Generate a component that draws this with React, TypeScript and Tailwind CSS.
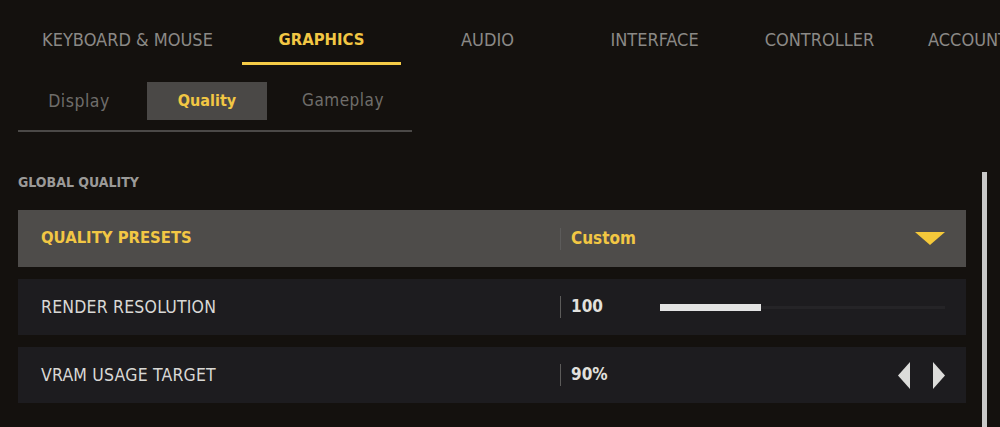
import React from "react";

const tabs = [
  { label: "KEYBOARD & MOUSE", w: "w-[195px]" },
  { label: "GRAPHICS", w: "w-[159px] ml-[17px]", active: true },
  { label: "AUDIO", w: "w-[173px]" },
  { label: "INTERFACE", w: "w-[161px]" },
  { label: "CONTROLLER", w: "w-[169px]" },
  { label: "ACCOUNT", w: "w-[128px]" },
];

function Divider() {
  return <div className="w-px h-[22px] bg-[#5c5b5a]" />;
}

function Row({
  label,
  value,
  active,
  children,
}: {
  label: string;
  value: string;
  active?: boolean;
  children?: React.ReactNode;
}) {
  return (
    <div
      className={
        "flex items-center pl-[23px] pr-[21px] " +
        (active ? "h-[57px] bg-[#4e4c4a]" : "h-[56px] bg-[#1d1c1f]")
      }
    >
      <div
        className={
          "w-[519px] " +
          (active
            ? "text-[16.5px] font-bold text-[#f2c744]"
            : "text-[17.5px] tracking-[0.2px] text-[#d9d8d5]")
        }
      >
        {label}
      </div>
      <Divider />
      <div
        className={
          "ml-[10px] text-[17px] font-bold " +
          (active ? "text-[#f2c744]" : "text-[#e2e1de]")
        }
      >
        {value}
      </div>
      <div className="flex-1 flex items-center justify-end">{children}</div>
    </div>
  );
}

export default function App() {
  return (
    <div className="w-[1000px] h-[427px] overflow-hidden bg-[#14110e] font-['Liberation_Sans_Narrow','DejaVu_Sans_Condensed','Liberation_Sans',sans-serif]">
      {/* Top tabs */}
      <div className="flex pl-[30px] whitespace-nowrap">
        {tabs.map((t) => (
          <div
            key={t.label}
            className={
              "shrink-0 text-center pt-[28px] pb-[10px] leading-[24px] border-b-[3px] " +
              t.w +
              (t.active
                ? " text-[16.5px] font-bold text-[#f2c744] border-[#f5cb46]"
                : " text-[18px] text-[#8b8986] border-transparent")
            }
          >
            {t.label}
          </div>
        ))}
      </div>

      {/* Sub tabs */}
      <div className="mt-[17px] ml-[18px] w-[394px] flex pb-[10px] border-b-2 border-[#4b4947] text-[17.5px] tracking-[0.5px]">
        <div className="w-[122px] h-[38px] flex items-center justify-center text-[#6f6d6a]">Display</div>
        <div className="ml-[7px] w-[120px] h-[38px] flex items-center justify-center bg-[#4a4846] text-[16px] font-bold text-[#f2c744] tracking-[0px]">
          Quality
        </div>
        <div className="ml-[16px] w-[120px] h-[38px] flex items-center justify-center text-[#6f6d6a] text-[17px]">
          Gameplay
        </div>
      </div>

      {/* Content */}
      <div className="flex mt-[40px]">
        <div className="ml-[18px] w-[948px]">
          <div className="text-[14px] leading-[20px] font-bold text-[#9b9a98]">GLOBAL QUALITY</div>
          <div className="mt-[18px] flex flex-col gap-[12px]">
            <Row label="QUALITY PRESETS" value="Custom" active>
              <svg width="30" height="13" viewBox="0 0 30 13">
                <polygon points="0,0 30,0 15,13" fill="#f5c93a" />
              </svg>
            </Row>
            <Row label="RENDER RESOLUTION" value="100">
              <div className="w-[285px] h-[7px] flex items-center">
                <div className="w-[101px] h-[7px] bg-[#e3e3e3]" />
                <div className="flex-1 h-[3px] bg-[#252427]" />
              </div>
            </Row>
            <Row label="VRAM USAGE TARGET" value="90%">
              <div className="flex items-center gap-[23px]">
                <svg width="12" height="27" viewBox="0 0 12 27">
                  <polygon points="12,0 12,27 0,13.5" fill="#dcdcda" />
                </svg>
                <svg width="12" height="27" viewBox="0 0 12 27">
                  <polygon points="0,0 0,27 12,13.5" fill="#dcdcda" />
                </svg>
              </div>
            </Row>
          </div>
        </div>
        <div className="ml-[16px] w-[5px] h-[260px] bg-[#c9c9c8]" />
      </div>
    </div>
  );
}
